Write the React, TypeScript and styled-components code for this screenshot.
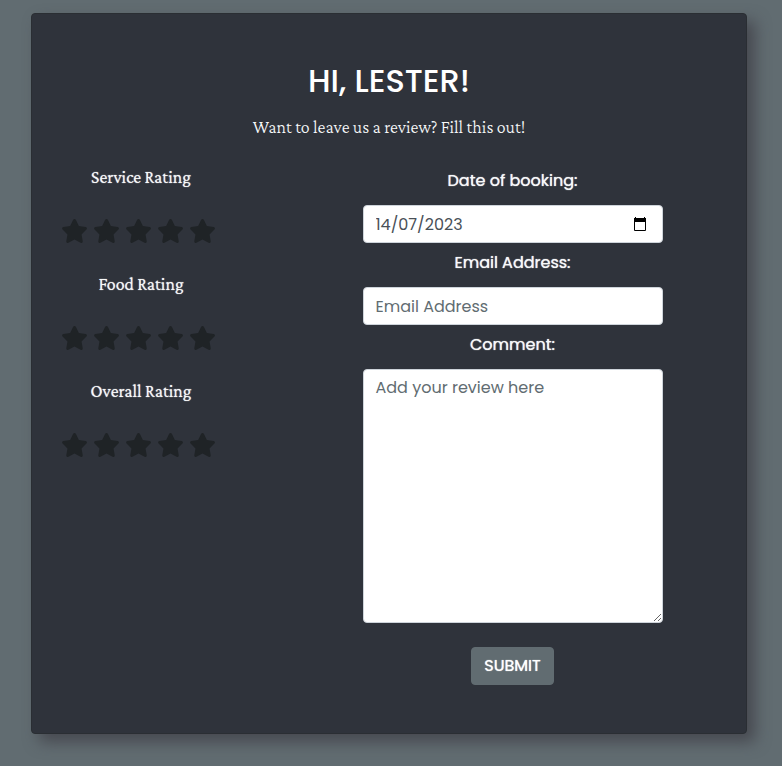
import React from "react";
import styled, { createGlobalStyle } from "styled-components";
import { FaStar } from "react-icons/fa6";

const sans = `Poppins, Inter, "Liberation Sans", sans-serif`;
const serif = `"Crimson Pro", "Liberation Serif", "Times New Roman", serif`;

const GlobalStyle = createGlobalStyle`
  *, *::before, *::after { box-sizing: border-box; }
  body {
    margin: 0;
    background: #616c71;
    color: #f8f9fa;
    font-family: ${sans};
    font-size: 16px;
    line-height: 24px;
  }
`;

const Page = styled.main`
  padding: 13px 35px 32px 31px;
`;

const Card = styled.section`
  padding: 48px 0;
  background: #2f333b;
  border: 1px solid #2a2e33;
  border-radius: 4px;
  box-shadow: 8px 8px 15px #474950;
`;

const Header = styled.header`
  text-align: center;
`;

const Title = styled.h1`
  margin: 0 0 14px;
  color: #fff;
  font-size: 32px;
  font-weight: 500;
  line-height: 38px;
  text-transform: uppercase;
`;

const Lead = styled.p`
  margin: 0;
  font-family: ${serif};
  font-size: 18px;
  font-weight: 300;
  line-height: 27px;
`;

const ReviewForm = styled.form`
  display: grid;
  grid-template-columns: 218px 1fr;
  column-gap: 29px;
  margin-top: 23px;
`;

const Ratings = styled.div`
  display: flex;
  flex-direction: column;
`;

const RatingGroup = styled.fieldset`
  display: flex;
  flex-direction: column;
  align-items: center;
  min-width: 0;
  height: 107px;
  margin: 0;
  padding: 0;
  border: 0;
`;

const RatingName = styled.legend`
  padding: 0;
  margin: 0 auto 28px;
  font-family: ${serif};
  font-size: 18px;
  font-weight: 300;
  line-height: 27px;
  text-shadow: 0 0 1px #f8f9fa;
`;

const Stars = styled.div`
  display: flex;
`;

const StarLabel = styled.label`
  display: block;
  width: 32px;
  height: 24px;
  color: #1f2326;
  cursor: pointer;

  &:has(input:focus-visible) {
    outline: 2px solid #9aa5ab;
  }

  svg {
    display: block;
    width: 27px;
    height: 24px;
  }
`;

const StarInput = styled.input`
  position: absolute;
  width: 1px;
  height: 1px;
  margin: 0;
  opacity: 0;
`;

const Fields = styled.div`
  display: flex;
  flex-direction: column;
  align-items: center;
  padding-top: 5px;
`;

const Field = styled.div`
  display: flex;
  flex-direction: column;
  width: 300px;
  max-width: 100%;
`;

const FieldLabel = styled.label`
  margin-bottom: 12px;
  font-size: 16px;
  font-weight: 400;
  line-height: 24px;
  text-align: center;
  text-shadow: 0 0 1px #f8f9fa;
`;

const Input = styled.input`
  display: block;
  width: 100%;
  height: 38px;
  margin-bottom: 8px;
  padding: 6px 12px;
  border: 1px solid #ced4da;
  border-radius: 4px;
  background: #fff;
  color: #495057;
  font-family: ${sans};
  font-size: 16px;
  line-height: 24px;

  &::placeholder {
    color: #616c71;
    opacity: 1;
  }
`;

const DateBox = styled.div`
  position: relative;
`;

const CalendarButton = styled.button`
  position: absolute;
  top: 8px;
  right: 12px;
  width: 22px;
  height: 22px;
  padding: 3px;
  border: 0;
  background: transparent;
  cursor: pointer;

  svg {
    display: block;
  }
`;

const Comment = styled(Input)`
  height: 254px;
  margin-bottom: 24px;
  resize: vertical;
`;

const Submit = styled.button`
  height: 38px;
  padding: 6px 12px;
  border: 1px solid #616c71;
  border-radius: 4px;
  background: #616c71;
  color: #fff;
  font-family: ${sans};
  font-size: 16px;
  font-weight: 400;
  line-height: 24px;
  text-transform: uppercase;
  text-shadow: 0 0 1px #fff;
  cursor: pointer;
`;

function Rating({ name, title }: { name: string; title: string }) {
  return (
    <RatingGroup>
      <RatingName>{title}</RatingName>
      <Stars>
        {[1, 2, 3, 4, 5].map((n) => (
          <StarLabel key={n}>
            <StarInput type="radio" name={name} value={n} aria-label={`${n}`} />
            <FaStar aria-hidden="true" />
          </StarLabel>
        ))}
      </Stars>
    </RatingGroup>
  );
}

export default function App() {
  return (
    <>
      <GlobalStyle />
      <Page>
        <Card>
          <Header>
            <Title>Hi, Lester!</Title>
            <Lead>Want to leave us a review? Fill this out!</Lead>
          </Header>
          <ReviewForm onSubmit={(e) => e.preventDefault()}>
            <Ratings>
              <Rating name="service" title="Service Rating" />
              <Rating name="food" title="Food Rating" />
              <Rating name="overall" title="Overall Rating" />
            </Ratings>
            <Fields>
              <Field>
                <FieldLabel htmlFor="date">Date of booking:</FieldLabel>
                <DateBox>
                  <Input id="date" type="text" inputMode="numeric" defaultValue="14/07/2023" />
                  <CalendarButton type="button" aria-label="Calendar">
                    <svg width="16" height="16" viewBox="0 0 16 16" aria-hidden="true">
                      <path
                        fill="#000"
                        fillRule="evenodd"
                        d="M3 1h1v1h8V1h1v1h1v12a1 1 0 0 1-1 1H3a1 1 0 0 1-1-1V2h1zM3 6v8h10V6z"
                      />
                    </svg>
                  </CalendarButton>
                </DateBox>
              </Field>
              <Field>
                <FieldLabel htmlFor="email">Email Address:</FieldLabel>
                <Input id="email" type="email" placeholder="Email Address" />
              </Field>
              <Field>
                <FieldLabel htmlFor="comment">Comment:</FieldLabel>
                <Comment as="textarea" id="comment" placeholder="Add your review here" />
              </Field>
              <Submit type="submit">Submit</Submit>
            </Fields>
          </ReviewForm>
        </Card>
      </Page>
    </>
  );
}
